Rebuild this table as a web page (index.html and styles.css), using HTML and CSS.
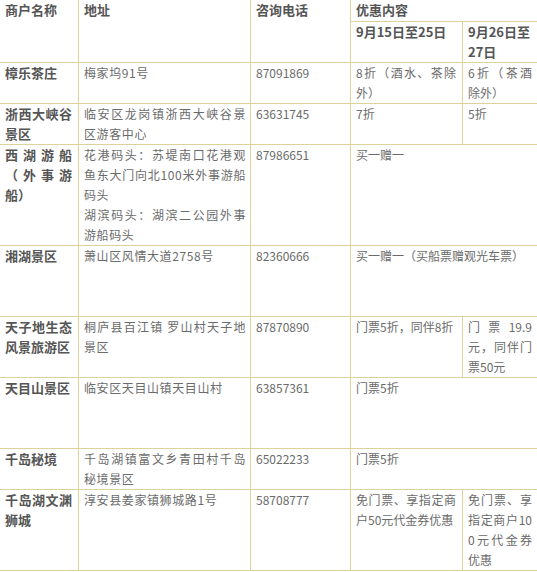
FILE: index.html
```html
<!DOCTYPE html>
<html lang="zh-CN">
<head>
<meta charset="utf-8">
<title>优惠商户</title>
<link rel="stylesheet" href="styles.css">
</head>
<body>
<table class="deals">
  <colgroup>
    <col class="col-name">
    <col class="col-addr">
    <col class="col-tel">
    <col class="col-early">
    <col class="col-late">
  </colgroup>
  <thead>
    <tr class="row-head">
      <th rowspan="2">商户名称</th>
      <th rowspan="2" class="addr-head">地址</th>
      <th rowspan="2">咨询电话</th>
      <th colspan="2">优惠内容</th>
    </tr>
    <tr class="row-2">
      <th>9月15日至25日</th>
      <th class="late">9月26日至27日</th>
    </tr>
  </thead>
  <tbody>
    <tr class="row-2">
      <td class="name">樟乐茶庄</td>
      <td class="addr">梅家坞91号</td>
      <td class="tel">87091869</td>
      <td>8折（酒水、茶除外）</td>
      <td class="late">6折（茶酒除外）</td>
    </tr>
    <tr class="row-2">
      <td class="name">浙西大峡谷景区</td>
      <td class="addr">临安区龙岗镇浙西大峡谷景区游客中心</td>
      <td class="tel">63631745</td>
      <td>7折</td>
      <td class="late">5折</td>
    </tr>
    <tr class="row-5">
      <td class="name">西湖游船（外事游船）</td>
      <td class="addr">
        <p class="para">花港码头：苏堤南口花港观鱼东大门向北100米外事游船码头</p>
        <p class="para">湖滨码头：湖滨二公园外事游船码头</p>
      </td>
      <td class="tel">87986651</td>
      <td colspan="2">买一赠一</td>
    </tr>
    <tr class="row-35">
      <td class="name">湘湖景区</td>
      <td class="addr">萧山区风情大道2758号</td>
      <td class="tel">82360666</td>
      <td colspan="2">买一赠一（买船票赠观光车票）</td>
    </tr>
    <tr class="row-3">
      <td class="name">天子地生态风景旅游区</td>
      <td class="addr">桐庐县百江镇 罗山村天子地景区</td>
      <td class="tel">87870890</td>
      <td>门票5折，同伴8折</td>
      <td class="late">门票19.9元，同伴门票50元</td>
    </tr>
    <tr class="row-35">
      <td class="name">天目山景区</td>
      <td class="addr">临安区天目山镇天目山村</td>
      <td class="tel">63857361</td>
      <td colspan="2">门票5折</td>
    </tr>
    <tr class="row-2">
      <td class="name">千岛秘境</td>
      <td class="addr">千岛湖镇富文乡青田村千岛秘境景区</td>
      <td class="tel">65022233</td>
      <td colspan="2">门票5折</td>
    </tr>
    <tr class="row-4">
      <td class="name">千岛湖文渊狮城</td>
      <td class="addr">淳安县姜家镇狮城路1号</td>
      <td class="tel">58708777</td>
      <td>免门票、享指定商户50元代金券优惠</td>
      <td class="late break-all">免门票、享指定商户100元代金券优惠</td>
    </tr>
  </tbody>
</table>
</body>
</html>
```

FILE: styles.css
```css
html,
body {
  margin: 0;
  padding: 0;
  overflow: hidden;
  background: #ffffff;
}

.deals {
  border-collapse: collapse;
  table-layout: fixed;
  width: 541px;
  margin: -1px 0 0 -1px;
  font-family: "Noto Sans CJK SC", "Noto Sans", sans-serif;
  font-size: 12px;
  line-height: 20px;
  color: #6b6b6b;
  text-autospace: no-autospace;
  text-spacing-trim: space-all;
}

.col-name { width: 79px; }
.col-addr { width: 172px; }
.col-tel { width: 100px; }
.col-early { width: 112px; }
.col-late { width: 78px; }

.deals th,
.deals td {
  border: 1px solid #dcd39a;
  padding: 0 6px 0 5px;
  vertical-align: top;
  text-align: justify;
}

.deals th {
  font-size: 13px;
  font-weight: bold;
  color: #555555;
  text-align: left;
}

.deals .name {
  font-size: 13px;
  font-weight: bold;
  color: #555555;
}

.deals .addr {
  letter-spacing: 0.6px;
  padding-right: 4px;
}

.deals .late {
  padding-right: 8px;
}

.break-all {
  word-break: break-all;
}

.para {
  margin: 0;
}

.row-head { height: 22px; }
.row-2 { height: 41px; }
.row-3 { height: 61px; }
.row-35 { height: 71px; }
.row-4 { height: 81px; }
.row-5 { height: 101px; }
```
